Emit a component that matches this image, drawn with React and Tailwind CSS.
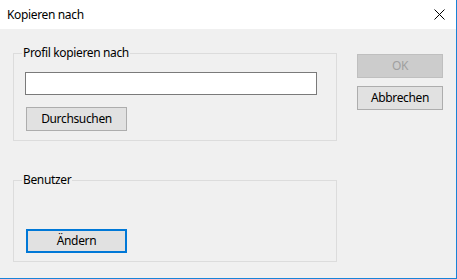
import React from 'react';

const font = { fontFamily: '"Noto Sans", "Liberation Sans", sans-serif' };

const Group = ({ title, height, children }) => (
  <div className={`relative border border-[#dcdcdc] w-[324px] ${height}`}>
    <span className="absolute left-[8px] top-[-9px] px-[1px] bg-[#f0f0f0] text-[12px] leading-[16px] text-black">
      {title}
    </span>
    {children}
  </div>
);

const App = () => {
  return (
    <div
      className="w-[457px] h-[279px] flex flex-col border-r border-b border-[#1883d7] bg-[#f0f0f0] text-black tracking-[-0.35px]"
      style={font}
    >
      {/* Title bar */}
      <div className="h-[29px] bg-white flex items-center justify-between pl-[7px] pr-[10px]">
        <span className="text-[12px] leading-[16px]">Kopieren nach</span>
        <svg width="11" height="11" viewBox="0 0 11 11" className="mr-[1px]">
          <path d="M0.5 0.5 L10.5 10.5 M10.5 0.5 L0.5 10.5" stroke="#000" strokeWidth="1" />
        </svg>
      </div>

      {/* Body */}
      <div className="flex-1 flex pl-[13px]">
        <div className="flex flex-col pt-[24px] gap-[39px]">
          <Group title="Profil kopieren nach" height="h-[88px]">
            <div className="pl-[11px] pt-[18px]">
              <div className="w-[292px] h-[23px] bg-white border border-[#7a7a7a]" />
              <button className="mt-[12px] ml-[1px] w-[101px] h-[24px] bg-[#e1e1e1] border border-[#adadad] text-[12px] leading-[16px]">
                Durchsuchen
              </button>
            </div>
          </Group>
          <Group title="Benutzer" height="h-[82px]">
            <div className="pl-[12px] pt-[46px]">
              <button className="w-[101px] h-[24px] bg-[#e1e1e1] border-2 border-[#0078d7] text-[12px] leading-[16px]">
                Ändern
              </button>
            </div>
          </Group>
        </div>

        <div className="flex flex-col pt-[25px] pl-[20px] gap-[8px]">
          <button
            disabled
            className="w-[86px] h-[24px] bg-[#cccccc] border border-[#bfbfbf] text-[#a0a0a0] text-[12px] leading-[16px]"
          >
            OK
          </button>
          <button className="w-[86px] h-[24px] bg-[#e1e1e1] border border-[#adadad] text-[12px] leading-[16px]">
            Abbrechen
          </button>
        </div>
      </div>
    </div>
  );
};

export default App;
